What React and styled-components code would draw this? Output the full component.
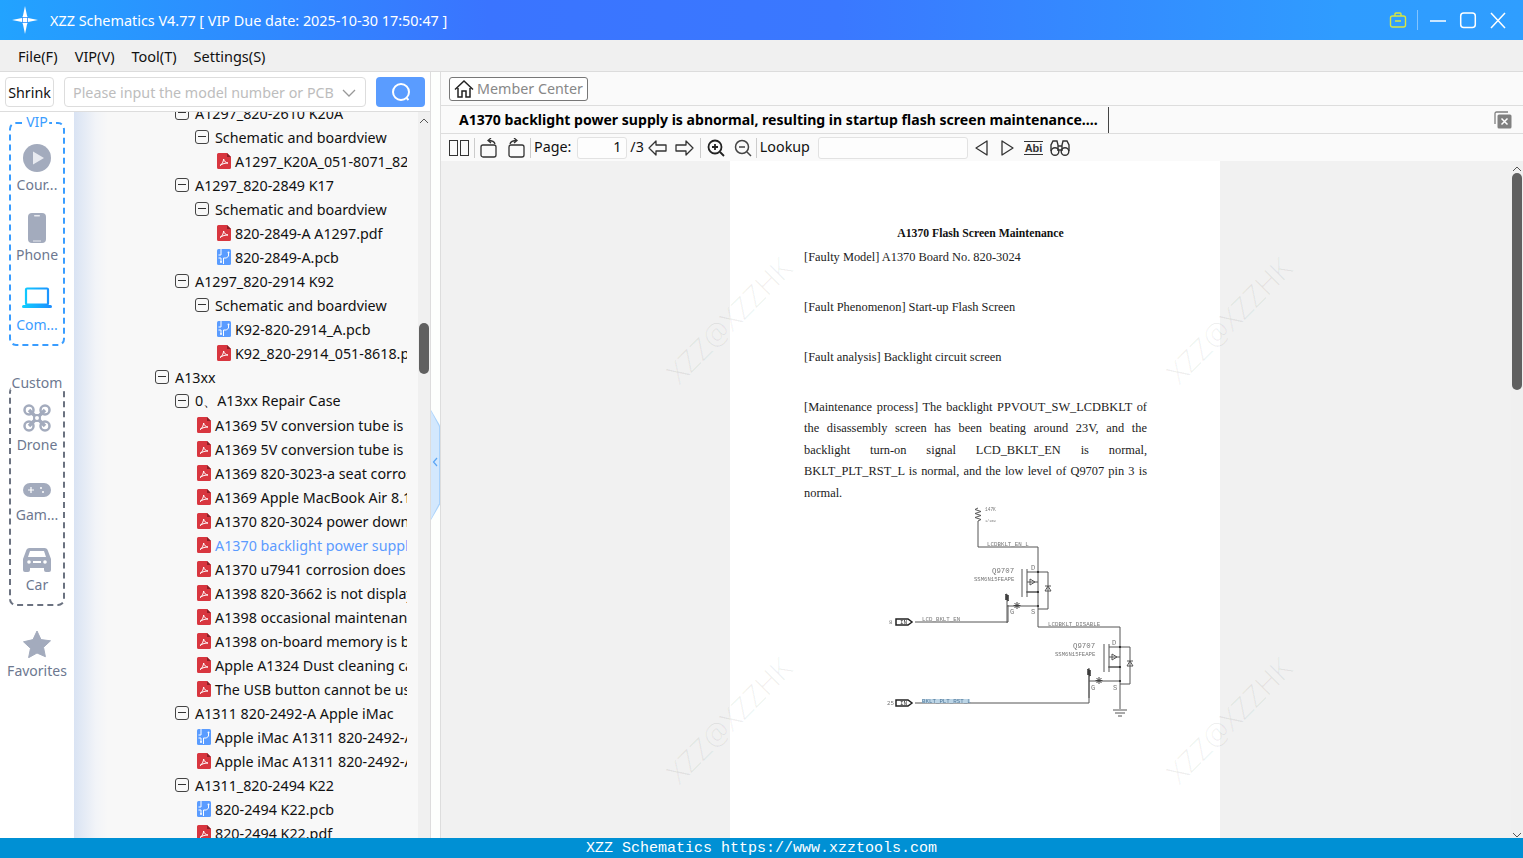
import React from "react";
import styled, { createGlobalStyle } from "styled-components";

const Global = createGlobalStyle`
  html, body { margin: 0; padding: 0; height: 100%; overflow: hidden; background: #fff; }
  * { box-sizing: border-box; }
  body { font-family: "Noto Sans", "Open Sans", sans-serif; font-size: 14px; color: #111; }
`;

const Window = styled.div`display:flex;flex-direction:column;width:1523px;height:858px;overflow:hidden;`;
const TitleBar = styled.header`
  height:40px;flex:none;display:flex;align-items:center;color:#fff;padding-left:12px;
  background:linear-gradient(90deg,#22a3ff 0%,#3a74ff 32%,#3a78ff 55%,#2f9cff 88%,#2f9eff 100%);
`;
const AppTitle = styled.div`font-size:14.4px;margin-left:12px;white-space:nowrap;flex:1;`;
const WinControls = styled.div`display:flex;align-items:center;padding-right:16px;`;
const WinBtn = styled.span`display:flex;width:18px;height:18px;margin-left:${p=>p.$ml}px;`;
const WinSep = styled.span`width:1px;height:20px;background:rgba(255,255,255,.4);margin-left:10px;`;
const MenuBar = styled.nav`
  height:32px;flex:none;display:flex;align-items:center;gap:17px;padding:0 0 0 18px;background:#f0f0f0;
  border-bottom:1px solid #dcdcdc;font-size:14.5px;
`;
const Body = styled.div`flex:1;display:flex;min-height:0;`;
const LeftPanel = styled.aside`width:431px;flex:none;display:flex;flex-direction:column;border-right:1px solid #ddd;background:#fff;`;
const SearchRow = styled.div`height:40px;flex:none;display:flex;align-items:center;padding:0 5px;border-bottom:1px solid #ddd;background:#fff;`;
const Shrink = styled.button`
  width:49px;height:30px;padding:2px 0 0;font:14.3px "Noto Sans",sans-serif;color:#111;background:#fff;border:1px solid #ddd;border-radius:4px;
`;
const SearchBox = styled.div`
  width:302px;height:30px;margin-left:10px;display:flex;align-items:center;justify-content:space-between;
  padding:2px 9px 0 8px;border:1px solid #ddd;border-radius:4px;color:#bdbdbd;font-size:14.3px;white-space:nowrap;
`;
const SearchBtn = styled.button`
  width:49px;height:30px;margin-left:10px;border:0;border-radius:4px;background:#5a9cff;display:flex;align-items:center;justify-content:center;padding:0;
`;
const LeftBody = styled.div`flex:1;display:flex;min-height:0;`;
const Rail = styled.div`width:74px;flex:none;display:flex;flex-direction:column;align-items:center;padding-top:10px;background:#fff;`;
const RailGroup = styled.div`
  position:relative;flex:none;width:56px;height:${p=>p.$h}px;margin-top:${p=>p.$mt||0}px;border:2px dashed ${p=>p.$c};border-radius:7px;
  display:flex;flex-direction:column;align-items:center;padding-top:${p=>p.$pt||0}px;
`;
const RailLabel = styled.span`
  position:absolute;top:${p=>p.$top}px;left:50%;transform:translateX(-50%);background:#fff;color:${p=>p.$c};font-size:14px;line-height:15px;padding:0 ${p=>p.$px||1}px;white-space:nowrap;
`;
const RailItem = styled.div`
  display:flex;flex:none;flex-direction:column;align-items:center;height:70px;color:${p=>p.$active?"#3a9dff":"#6d7890"};font-size:14px;line-height:20px;white-space:nowrap;
`;
const RailIcon = styled.span`display:flex;flex:none;align-items:center;justify-content:center;height:32px;width:32px;margin-top:${p=>p.$mt||0}px;margin-bottom:${p=>p.$mb||1}px;`;
const Favorites = styled(RailItem)`margin-top:22px;`;
const TreeArea = styled.div`
  flex:1;position:relative;overflow:hidden;display:flex;
  background:linear-gradient(90deg,#d9e3f3 0,#f2f4f8 22px,#f8f8f8 34px,#f8f8f8 100%);
`;
const TreeClip = styled.div`width:333px;flex:none;overflow:hidden;`;
const TreeList = styled.ul`list-style:none;margin:-11px 0 0;padding:0;`;
const Row = styled.li`
  height:24px;display:flex;align-items:center;white-space:nowrap;padding-left:${p=>p.$pl}px;font-size:14.3px;color:${p=>p.$active?"#5c9bff":"#111"};
`;
const Toggle = styled.span`
  width:14px;height:14px;flex:none;border:1px solid #444;border-radius:3px;margin-right:6px;position:relative;
  &::after{content:"";position:absolute;left:2px;right:2px;top:5px;height:1px;background:#333;}
`;
const FileIco = styled.span`display:flex;flex:none;width:14px;height:16px;margin:0 4px 0 2px;`;
const VScroll = styled.div`width:12px;flex:none;background:#f0f0f0;display:flex;flex-direction:column;align-items:center;margin-left:${p=>p.$ml||0}px;`;
const Thumb = styled.div`width:10px;height:${p=>p.$h}px;margin-top:${p=>p.$mt}px;border-radius:5px;background:#606060;flex:none;`;
const ArrowUp = styled.span`display:flex;margin-top:${p=>p.$mt}px;flex:none;`;
const Strip = styled.div`width:10px;flex:none;background:#fdfffd;border-right:1px solid #ddd;`;
const Handle = styled.div`
  width:9px;height:110px;margin-top:338px;background:#a9d2fb;
  clip-path:polygon(0 0,100% 14%,100% 86%,0 100%);position:relative;
  &::before{content:"";position:absolute;inset:0 1px 0 0;background:#d3e8fd;clip-path:polygon(0 1%,100% 15%,100% 85%,0 99%);}
`;
const HandleArrow = styled.svg`position:absolute;left:1px;top:47px;`;
const Right = styled.main`flex:1;display:flex;flex-direction:column;min-width:0;background:#fafafa;`;
const MemberBar = styled.div`height:34px;flex:none;display:flex;align-items:center;padding-left:8px;border-bottom:1px solid #ddd;background:#fafafa;`;
const MemberBtn = styled.button`
  height:24px;width:139px;padding:0 0 0 4px;display:flex;align-items:center;gap:3px;background:#fff;border:1px solid #777;border-radius:3px;color:#888;font:14.3px "Noto Sans",sans-serif;white-space:nowrap;
`;
const TabRow = styled.div`height:28px;flex:none;display:flex;align-items:center;border-bottom:1px solid #ddd;padding-right:11px;`;
const Tab = styled.div`
  width:668px;height:26px;padding-left:18px;display:flex;align-items:center;font-weight:700;font-size:14.07px;white-space:nowrap;color:#000;border-right:1px solid #444;
`;
const CloseAll = styled.span`margin-left:auto;display:flex;`;
const Toolbar = styled.div`height:27px;flex:none;display:flex;align-items:center;padding-left:8px;background:#fafafa;font-size:14.3px;`;
const Sep = styled.span`width:1px;height:20px;background:#ccc;margin:0 ${p=>p.$r||4}px 0 ${p=>p.$l||4}px;flex:none;`;
const Tool = styled.span`display:flex;flex:none;margin-left:${p=>p.$ml||0}px;`;
const Lbl = styled.span`flex:none;margin:-2px 0 0 ${p=>p.$ml||0}px;white-space:nowrap;`;
const NumBox = styled.div`
  width:${p=>p.$w}px;height:22px;margin-left:${p=>p.$ml}px;flex:none;border:1px solid #e2e2e2;border-radius:3px;background:#fdfdfd;text-align:right;padding-right:5px;line-height:18px;
`;
const Viewer = styled.div`flex:1;min-height:0;display:flex;background:#f1f1f1;position:relative;overflow:hidden;`;
const PageWrap = styled.div`flex:1;display:flex;justify-content:flex-start;padding-left:289px;min-width:0;`;
const Page = styled.article`
  width:490px;flex:none;background:#fff;padding:61px 73px 0 74px;color:#222;font:12.4px/21.5px "Liberation Serif",serif;
`;
const PdfTitle = styled.h1`font:700 11.7px/21.5px "Liberation Serif",serif;text-align:center;margin:1px 0 2px;padding-left:10px;color:#111;`;
const PdfPara = styled.p`margin:0 0 28.5px;text-align:${p=>p.$j?"justify":"left"};`;
const Schem = styled.svg`display:block;margin:-33px 0 0 66px;filter:blur(.3px);`;
const Watermark = styled.span`
  position:absolute;left:${p=>p.$x}px;top:${p=>p.$y}px;transform:translate(-50%,-50%) rotate(-45deg);
  font:300 29px/32px "Noto Sans",sans-serif;color:rgba(0,0,0,.06);white-space:nowrap;pointer-events:none;
`;
const Status = styled.footer`
  height:20px;flex:none;background:#0090d4;color:#fff;text-align:center;font:15px/22px "Liberation Mono",monospace;
`;

const Gray = "#a3abbd";
const Pdf = () => (
  <svg width="14" height="16" viewBox="0 0 14 16">
    <path d="M1.500 0H10l4 4v10.500a1.500 1.500 0 0 1-1.500 1.500h-11A1.500 1.500 0 0 1 0 14.500v-13A1.500 1.500 0 0 1 1.500 0z" fill="#d8363f"/>
    <path d="M10 0l4 4h-4z" fill="#8c1f26"/>
    <path d="M3 12.500c2-1 3.500-4 3.600-6.500.8 2.500 2 3.700 4.400 4-2.600 0-5.600.6-8 2.500z" fill="none" stroke="#fff" strokeWidth="1"/>
  </svg>
);
const Pcb = () => (
  <svg width="14" height="16" viewBox="0 0 14 16">
    <rect width="14" height="16" rx="1.500" fill="#5a9cff"/>
    <path d="M4 0v6H1.500M6.500 15V9h3l2-2V4M1.500 9H4v4" fill="none" stroke="#fff" strokeWidth="1"/>
    <circle cx="11.500" cy="3.500" r="1" fill="#fff"/><circle cx="4" cy="13" r="1" fill="#fff"/>
  </svg>
);
const Chev = ({dir="up",c="#555"}) => (
  <svg width="10" height="6" viewBox="0 0 10 6"><path d={dir==="up"?"M1 5l4-4 4 4":"M1 1l4 4 4-4"} fill="none" stroke={c} strokeWidth="1"/></svg>
);

const tree = [
  [2,"t","A1297_820-2610 K20A"],[3,"t","Schematic and boardview"],[4,"p","A1297_K20A_051-8071_820-2610.pdf"],
  [2,"t","A1297_820-2849 K17"],[3,"t","Schematic and boardview"],[4,"p","820-2849-A A1297.pdf"],[4,"b","820-2849-A.pcb"],
  [2,"t","A1297_820-2914 K92"],[3,"t","Schematic and boardview"],[4,"b","K92-820-2914_A.pcb"],[4,"p","K92_820-2914_051-8618.pdf"],
  [1,"t","A13xx"],[2,"t","0、A13xx Repair Case"],
  [3,"p","A1369 5V conversion tube is short circuited"],[3,"p","A1369 5V conversion tube is damaged repair"],
  [3,"p","A1369 820-3023-a seat corrosion repair"],[3,"p","A1369 Apple MacBook Air 8.1 repair"],
  [3,"p","A1370 820-3024 power down repair case"],[3,"p","A1370 backlight power supply is abnormal",true],
  [3,"p","A1370 u7941 corrosion does not boot"],[3,"p","A1398 820-3662 is not displaying anything"],
  [3,"p","A1398 occasional maintenance case"],[3,"p","A1398 on-board memory is bad repair"],
  [3,"p","Apple A1324 Dust cleaning case"],[3,"p","The USB button cannot be used repair"],
  [2,"t","A1311 820-2492-A Apple iMac"],[3,"b","Apple iMac A1311 820-2492-A.pcb"],[3,"p","Apple iMac A1311 820-2492-A.pdf"],
  [2,"t","A1311_820-2494 K22"],[3,"b","820-2494 K22.pcb"],[3,"p","820-2494 K22.pdf"],
];
const indent = (lvl,kind) => kind==="t" ? 81+(lvl-1)*20 : 121+(lvl-3)*20;

const Fet = ({ x, y }) => (
  <g transform={`translate(${x} ${y})`}>
    <path d="M0 0h10v37H0M0 20h-12M-16 -3v28M-11 -3v28M-11 0H0M-11 10H0M-11 20h11M10 14l-3 5h6zM7 14h6M-3 10l-5-3v6zM-31 22v29M-31 34h30" stroke="#555"/>
    <path d="M-31 22l-2 1 4 1-4 1 4 1-4 1 4 1-2 1" stroke="#333"/>
    <path d="M-21 30v7M-24.500 33.500h7M-23.500 31l5 5M-18.500 31l-5 5" stroke="#444"/>
    <circle cx="0" cy="0" r="1.100" fill="#222" stroke="none"/>
    <circle cx="0" cy="20" r="1.100" fill="#222" stroke="none"/>
    <circle cx="0" cy="34" r="1.100" fill="#222" stroke="none"/>
  </g>
);

const Schematic = () => (
  <Schem width="280" height="225" viewBox="0 0 280 225" fill="none" stroke="#666" strokeWidth="1">
    <path d="M108 8l-3 1.500 6 2-6 2 6 2-6 2 6 2-3 1.500V47H168V127H250V209M243 210h14M245 213h10M248 216h4M138 105V122H45M219 168V203H45" stroke="#555"/>
    <Fet x={168} y={72} />
    <Fet x={250} y={147} />
    <rect x="52" y="199" width="48" height="4" fill="#bcd5e6" stroke="none"/>
    <path d="M26 119h12l4 3-4 3H26zM26 200h12l4 3-4 3H26z" strokeWidth="1.500" stroke="#222"/>
    <g fill="#777" stroke="none" fontFamily="Liberation Mono" fontSize="5.800">
      <text x="115" y="11" fontSize="4.500">147K</text>
      <text x="115" y="22" fontSize="3.500">1/16W</text>
      <text x="117" y="46">LCDBKLT_EN_L</text>
      <text x="122" y="73" fontSize="7.400">Q9707</text>
      <text x="104" y="81" fontSize="5.600">SSM6N15FEAPE</text>
      <text x="52" y="121">LCD_BKLT_EN</text>
      <text x="178" y="126">LCDBKLT_DISABLE</text>
      <text x="203" y="148" fontSize="7.400">Q9707</text>
      <text x="185" y="156" fontSize="5.600">SSM6N15FEAPE</text>
      <text x="52" y="203" fill="#50789a">BKLT_PLT_RST_L</text>
      <text x="30" y="124" fill="#333" fontSize="6">IN</text>
      <text x="30" y="205" fill="#333" fontSize="6">IN</text>
      <text x="19" y="124">8</text>
      <text x="17" y="205">25</text>
      <text x="161" y="70" fontSize="7">D</text>
      <text x="140" y="114" fontSize="7">G</text>
      <text x="161" y="114" fontSize="7">S</text>
      <text x="242" y="145" fontSize="7">D</text>
      <text x="221" y="190" fontSize="7">G</text>
      <text x="243" y="190" fontSize="7">S</text>
    </g>
  </Schem>
);

export default function App() {
  return (
    <Window>
      <Global />
      <TitleBar>
        <svg width="26" height="28" viewBox="0 0 26 28" fill="#fff">
          <path d="M13 0l2 9.500 1 2.500 10 2-10 2-1 2.500-2 9.500-2-9.500-1-2.500-10-2 10-2 1-2.500z"/>
          <path d="M10 11.500h6M10 16.500h6M10.500 11v6M15.500 11v6" stroke="#2c8fff" strokeWidth=".8"/>
          <circle cx="13" cy="14" r="1.500"/>
        </svg>
        <AppTitle>XZZ Schematics V4.77 [ VIP Due date: 2025-10-30 17:50:47 ]</AppTitle>
        <WinControls>
          <WinBtn $ml={0}>
            <svg width="18" height="18" viewBox="0 0 18 18" fill="none" stroke="#d9e63f" strokeWidth="1.400"><rect x="1.500" y="5" width="15" height="11" rx="2"/><path d="M6 5V3a1 1 0 0 1 1-1h4a1 1 0 0 1 1 1v2M6 10h6"/></svg>
          </WinBtn>
          <WinSep />
          <WinBtn $ml={11}><svg width="18" height="18" viewBox="0 0 18 18"><path d="M1 10h16" stroke="#fff" strokeWidth="1.500"/></svg></WinBtn>
          <WinBtn $ml={12}><svg width="18" height="18" viewBox="0 0 18 18"><rect x="1.700" y="2" width="14.600" height="14.600" rx="3" fill="none" stroke="#fff" strokeWidth="1.500"/></svg></WinBtn>
          <WinBtn $ml={12}><svg width="18" height="18" viewBox="0 0 18 18"><path d="M2 2l14 15M16 2L2 17" stroke="#fff" strokeWidth="1.500"/></svg></WinBtn>
        </WinControls>
      </TitleBar>
      <MenuBar><span>File(F)</span><span>VIP(V)</span><span>Tool(T)</span><span>Settings(S)</span></MenuBar>
      <Body>
        <LeftPanel>
          <SearchRow>
            <Shrink>Shrink</Shrink>
            <SearchBox>
              <span>Please input the model number or PCB</span>
              <svg width="14" height="8" viewBox="0 0 14 8"><path d="M1 1l6 6 6-6" fill="none" stroke="#999" strokeWidth="1.300"/></svg>
            </SearchBox>
            <SearchBtn>
              <svg width="20" height="20" viewBox="0 0 20 20" fill="none" stroke="#fff" strokeWidth="2"><circle cx="10" cy="10" r="8"/><path d="M15.500 16l2 2"/></svg>
            </SearchBtn>
          </SearchRow>
          <LeftBody>
            <Rail>
              <RailGroup $h={224} $c="#3a9dff" $pt={18}>
                <RailLabel $top={-10} $c="#3a9dff">VIP</RailLabel>
                <RailItem>
                  <RailIcon><svg width="28" height="28" viewBox="0 0 28 28"><circle cx="14" cy="14" r="14" fill={Gray}/><path d="M10 7.500l11 6.500-11 6.500z" fill="#e8eaf0"/></svg></RailIcon>
                  Cour...
                </RailItem>
                <RailItem>
                  <RailIcon><svg width="18" height="30" viewBox="0 0 18 30"><rect width="18" height="30" rx="4" fill={Gray}/><rect x="6" y="2" width="6" height="1.500" rx=".7" fill="#e8eaf0"/><rect x="5" y="27.500" width="8" height="1" fill="#e8eaf0"/></svg></RailIcon>
                  Phone
                </RailItem>
                <RailItem $active>
                  <RailIcon>
                    <svg width="30" height="22" viewBox="0 0 30 22"><defs><linearGradient id="lap" gradientUnits="userSpaceOnUse" x1="0" y1="0" x2="30" y2="0"><stop offset="0" stopColor="#0fd0ff"/><stop offset="1" stopColor="#1d8dff"/></linearGradient></defs><rect x="4" y="1.500" width="22" height="16" rx="1" fill="none" stroke="url(#lap)" strokeWidth="2.200"/><rect y="18" width="30" height="3" rx="1.500" fill="url(#lap)"/></svg>
                  </RailIcon>
                  Com...
                </RailItem>
              </RailGroup>
              <RailGroup $h={221} $mt={39} $c="#6b7280" $pt={15}>
                <RailLabel $top={-12} $c="#6d7890" $px={0}>Custom</RailLabel>
                <RailItem>
                  <RailIcon>
                    <svg width="28" height="28" viewBox="0 0 28 28" fill="none" stroke={Gray}><path d="M6 6l16 16M22 6L6 22" strokeWidth="3.500"/><circle cx="6" cy="6" r="4.500" strokeWidth="2.500"/><circle cx="22" cy="6" r="4.500" strokeWidth="2.500"/><circle cx="6" cy="22" r="4.500" strokeWidth="2.500"/><circle cx="22" cy="22" r="4.500" strokeWidth="2.500"/><circle cx="14" cy="14" r="3" fill="#fff" strokeWidth="2"/></svg>
                  </RailIcon>
                  Drone
                </RailItem>
                <RailItem>
                  <RailIcon $mt={2} $mb={-1}>
                    <svg width="28" height="14" viewBox="0 0 28 14"><rect width="28" height="14" rx="7" fill={Gray}/><path d="M5 7h6M8 4v6" stroke="#fff" strokeWidth="1.200"/><circle cx="18" cy="5" r="1" fill="#fff"/><circle cx="20" cy="9" r="1" fill="#fff"/></svg>
                  </RailIcon>
                  Gam...
                </RailItem>
                <RailItem>
                  <RailIcon $mt={2} $mb={-1}>
                    <svg width="28" height="24" viewBox="0 0 28 24" fill={Gray}><path d="M7 0h14a4 4 0 0 1 4 3l3 8v11a2 2 0 0 1-2 2h-3a2 2 0 0 1-2-2v-2H7v2a2 2 0 0 1-2 2H2a2 2 0 0 1-2-2V11l3-8a4 4 0 0 1 4-3z"/><path d="M7 3h14l2 6H5z" fill="#fff"/><circle cx="6" cy="14" r="1.800" fill="#fff"/><circle cx="22" cy="14" r="1.800" fill="#fff"/><rect x="10" y="13" width="8" height="2" fill="#fff"/></svg>
                  </RailIcon>
                  Car
                </RailItem>
              </RailGroup>
              <Favorites>
                <RailIcon><svg width="28" height="28" viewBox="0 0 28 28"><path d="M14 1l4 8.600 9.500 1.200-7 6.500 1.900 9.400L14 23l-8.400 4.700 1.900-9.400-7-6.500L10 9.600z" fill={Gray} stroke={Gray} strokeLinejoin="round"/></svg></RailIcon>
                Favorites
              </Favorites>
            </Rail>
            <TreeArea>
              <TreeClip>
                <TreeList>
                  {tree.map(([lvl,kind,text,active],i) => (
                    <Row key={i} $pl={indent(lvl,kind)} $active={active}>
                      {kind==="t" && <Toggle />}
                      {kind==="p" && <FileIco><Pdf /></FileIco>}
                      {kind==="b" && <FileIco><Pcb /></FileIco>}
                      {text}
                    </Row>
                  ))}
                </TreeList>
              </TreeClip>
              <VScroll $ml={11}>
                <ArrowUp $mt={6}><Chev /></ArrowUp>
                <Thumb $h={51} $mt={199} />
              </VScroll>
            </TreeArea>
          </LeftBody>
        </LeftPanel>
        <Strip>
          <Handle>
            <HandleArrow width="6" height="10" viewBox="0 0 6 10"><path d="M5 1L1.500 5 5 9" fill="none" stroke="#5aa5f5" strokeWidth="1.200"/></HandleArrow>
          </Handle>
        </Strip>
        <Right>
          <MemberBar>
            <MemberBtn>
              <svg width="20" height="20" viewBox="0 0 20 20" fill="none" stroke="#222" strokeWidth="1.500"><path d="M1 10.500L10 2l9 8.500M4 9v9h4v-6h4v6h4V9"/></svg>
              Member Center
            </MemberBtn>
          </MemberBar>
          <TabRow>
            <Tab>A1370 backlight power supply is abnormal, resulting in startup flash screen maintenance....</Tab>
            <CloseAll>
              <svg width="18" height="18" viewBox="0 0 18 18"><path d="M14 1H2.500A1.500 1.500 0 0 0 1 2.500V13" fill="none" stroke="#808080" strokeWidth="1.300"/><rect x="3.500" y="3.500" width="14" height="14" rx="1.500" fill="#808080"/><path d="M7.500 7.500l6 6M13.500 7.500l-6 6" stroke="#fff" strokeWidth="1.500"/></svg>
            </CloseAll>
          </TabRow>
          <Toolbar>
            <Tool><svg width="20" height="16" viewBox="0 0 20 16" fill="none" stroke="#333"><rect x=".5" y=".5" width="8" height="15"/><rect x="11.500" y=".5" width="8" height="15"/></svg></Tool>
            <Sep $l={5} $r={5} />
            <Tool><svg width="18" height="20" viewBox="0 0 18 20" fill="none" stroke="#333" strokeWidth="1.300"><rect x="1" y="7" width="15" height="12" rx="2"/><path d="M15 6C14.500 3.500 12 2.500 8 2.500M11 0L8 2.500 11 5"/></svg></Tool>
            <Tool $ml={9}><svg width="18" height="20" viewBox="0 0 18 20" fill="none" stroke="#333" strokeWidth="1.300"><rect x="2" y="7" width="15" height="12" rx="2"/><path d="M3 6C3.500 3.500 6 2.500 10 2.500M7 0l3 2.500L7 5"/></svg></Tool>
            <Sep $l={5} $r={3} />
            <Lbl>Page:</Lbl>
            <NumBox $w={50} $ml={6}>1</NumBox>
            <Lbl $ml={3}>/3</Lbl>
            <Tool $ml={4}><svg width="19" height="16" viewBox="0 0 19 16" fill="none" stroke="#333" strokeWidth="1.300"><path d="M1 8l7-7v4h10v6H8v4z" strokeLinejoin="round"/></svg></Tool>
            <Tool $ml={8}><svg width="19" height="16" viewBox="0 0 19 16" fill="none" stroke="#333" strokeWidth="1.300"><path d="M18 8l-7-7v4H1v6h10v4z" strokeLinejoin="round"/></svg></Tool>
            <Sep $l={6} $r={6} />
            <Tool><svg width="18" height="18" viewBox="0 0 18 18" fill="none" stroke="#222" strokeWidth="1.800"><circle cx="8" cy="8" r="6.500"/><path d="M13 13l4 4M5 8h6M8 5v6"/></svg></Tool>
            <Tool $ml={9}><svg width="18" height="18" viewBox="0 0 18 18" fill="none" stroke="#444" strokeWidth="1.500"><circle cx="8" cy="8" r="6.500"/><path d="M13 13l4 4M5 8h6"/></svg></Tool>
            <Sep $l={4} $r={3} />
            <Lbl>Lookup</Lbl>
            <NumBox $w={150} $ml={8} />
            <Tool $ml={7}><svg width="13" height="16" viewBox="0 0 13 16" fill="none" stroke="#333" strokeWidth="1.300"><path d="M12 1L1 8l11 7z" strokeLinejoin="round"/></svg></Tool>
            <Tool $ml={13}><svg width="13" height="16" viewBox="0 0 13 16" fill="none" stroke="#333" strokeWidth="1.300"><path d="M1 1l11 7-11 7z" strokeLinejoin="round"/></svg></Tool>
            <Tool $ml={10}>
              <svg width="19" height="16" viewBox="0 0 19 16"><path d="M0 1.500h19M0 14.500h19" stroke="#333"/><text x="9.500" y="12" textAnchor="middle" fontFamily="Liberation Sans" fontWeight="700" fontSize="11" fill="#333">Abi</text></svg>
            </Tool>
            <Tool $ml={7}><svg width="20" height="16" viewBox="0 0 20 16" fill="none" stroke="#333" strokeWidth="1.400"><path d="M1 11V5l2-4h4l1 4v6M19 11V5l-2-4h-4l-1 4v6M8 6h4M8 10h4"/><circle cx="5" cy="11.500" r="3.800"/><circle cx="15" cy="11.500" r="3.800"/></svg></Tool>
          </Toolbar>
          <Viewer>
            <PageWrap>
              <Page>
                <PdfTitle>A1370 Flash Screen Maintenance</PdfTitle>
                <PdfPara>[Faulty Model] A1370 Board No. 820-3024</PdfPara>
                <PdfPara>[Fault Phenomenon] Start-up Flash Screen</PdfPara>
                <PdfPara>[Fault analysis] Backlight circuit screen</PdfPara>
                <PdfPara $j>[Maintenance process] The backlight PPVOUT_SW_LCDBKLT of the disassembly screen has been beating around 23V, and the backlight turn-on signal LCD_BKLT_EN is normal, BKLT_PLT_RST_L is normal, and the low level of Q9707 pin 3 is normal.</PdfPara>
                <Schematic />
              </Page>
            </PageWrap>
            <VScroll>
              <ArrowUp $mt={5}><Chev /></ArrowUp>
              <Thumb $h={217} $mt={1} />
              <ArrowUp $mt={442}><Chev dir="down" /></ArrowUp>
            </VScroll>
            <Watermark $x={288} $y={159}>XZZ@XZZHK</Watermark>
            <Watermark $x={788} $y={159}>XZZ@XZZHK</Watermark>
            <Watermark $x={288} $y={559}>XZZ@XZZHK</Watermark>
            <Watermark $x={788} $y={559}>XZZ@XZZHK</Watermark>
          </Viewer>
        </Right>
      </Body>
      <Status>XZZ Schematics https://www.xzztools.com</Status>
    </Window>
  );
}
